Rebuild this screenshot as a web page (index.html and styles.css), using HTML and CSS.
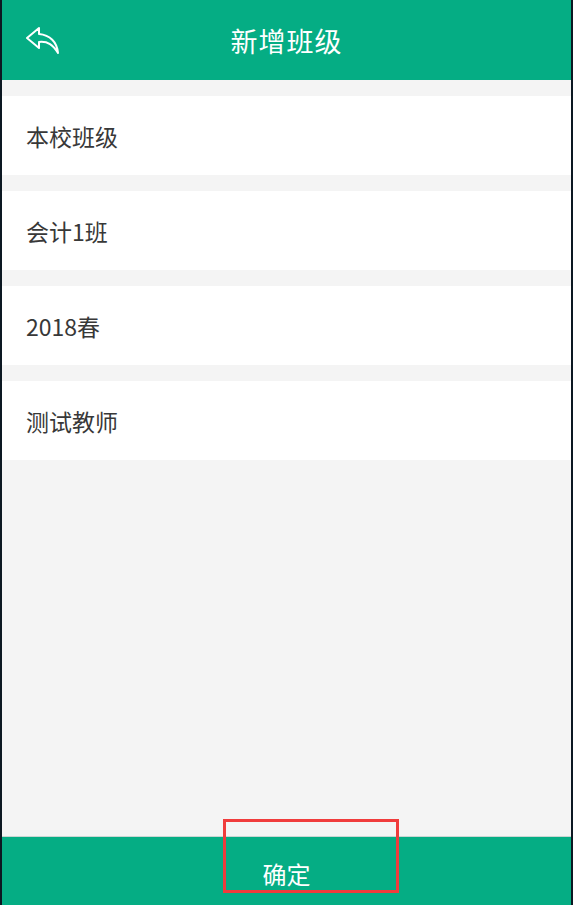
FILE: index.html
```html
<!DOCTYPE html>
<html lang="zh-CN">
<head>
    <meta charset="UTF-8">
    <meta name="viewport" content="width=device-width, initial-scale=1.0">
    <title>新增班级</title>
    <link rel="stylesheet" href="styles.css">
</head>
<body>
    <div class="screen">
        <header class="topbar">
            <span class="back">
                <svg width="34" height="28" viewBox="0 0 34 28" fill="none" stroke="#fff" stroke-width="2" stroke-linejoin="round">
                    <path d="M13 1 L1 11 L13 21 L13 15 C22 14 27 18 32 26 C31 15 24 8 13 7 Z"/>
                </svg>
            </span>
            <h1 class="title">新增班级</h1>
        </header>

        <main class="list">
            <div class="row">本校班级</div>
            <div class="row">会计1班</div>
            <div class="row">2018春</div>
            <div class="row">测试教师</div>
        </main>

        <footer class="bottombar">
            <button type="button" class="confirm">确定</button>
            <span class="mark"></span>
        </footer>
    </div>
</body>
</html>
```

FILE: styles.css
```css
/* General */
body {
    margin: 0;
    padding: 0;
    background-color: #0c1822;
    font-family: "Noto Sans CJK SC", "Noto Sans", sans-serif;
}

.screen {
    margin: 0 2px;
    height: 905px;
    display: flex;
    flex-direction: column;
    background-color: #f4f4f4;
}

/* Header */
.topbar {
    height: 80px;
    flex-shrink: 0;
    background-color: #05ad84;
    display: flex;
    align-items: center;
    justify-content: center;
    position: relative;
}

.back {
    position: absolute;
    left: 24px;
    top: 27px;
    line-height: 0;
}

.title {
    margin: 0;
    color: #fff;
    font-size: 27px;
    font-weight: normal;
    letter-spacing: 1px;
    position: relative;
    top: 0;
}

/* Rows */
.list {
    flex: 1;
    display: flex;
    flex-direction: column;
    gap: 16px;
    padding-top: 16px;
}

.row {
    height: 79px;
    background-color: #fff;
    display: flex;
    align-items: center;
    padding-left: 24px;
    font-size: 23px;
    color: #383838;
}

/* Bottom */
.bottombar {
    height: 68px;
    flex-shrink: 0;
    background-color: #05ad84;
    border-top: 1px solid #c9d6d2;
    position: relative;
}

.confirm {
    width: 100%;
    height: 100%;
    border: none;
    background: none;
    color: #fff;
    font-family: inherit;
    font-size: 24px;
    padding-top: 6px;
}

.mark {
    position: absolute;
    left: 221px;
    top: -18px;
    width: 170px;
    height: 68px;
    border: 3px solid #f03c3c;
    pointer-events: none;
}
```
